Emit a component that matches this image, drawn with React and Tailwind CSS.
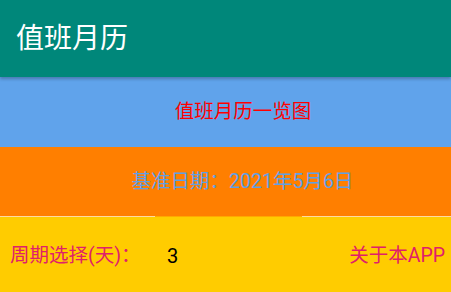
export default function App() {
  return (
    <div
      className="w-[451px] h-[292px] overflow-hidden flex flex-col bg-[#ffcc00]"
      style={{ fontFamily: '"Roboto", "Noto Sans CJK SC", sans-serif' }}
    >
      {/* toolbar */}
      <div className="h-[77px] shrink-0 bg-[#00877a] flex items-center pl-[16px] shadow-[0_2px_3px_rgba(0,0,0,0.25)] relative z-10">
        <span className="text-white text-[28px] leading-none">值班月历</span>
      </div>

      <div className="h-[70px] shrink-0 bg-[#60a3eb] flex items-center justify-center pl-[35px]">
        <span className="text-[#ff0000] text-[19.5px] leading-none">值班月历一览图</span>
      </div>

      <div className="h-[69px] shrink-0 bg-[#ff7f00] flex items-center justify-center pl-[34px]">
        <span className="text-[#5fa0e6] text-[19.5px] leading-none">基准日期：2021年5月6日</span>
      </div>

      <div className="h-px shrink-0 flex">
        <div className="w-[155px] bg-[#ffd9a0]" />
        <div className="w-[147px] bg-[#ffa800]" />
        <div className="flex-1 bg-[#ffd9a0]" />
      </div>

      <div className="flex-1 flex items-center justify-between pl-[10px] pr-[6px] pt-[3px]">
        <div className="flex items-center">
          <span className="text-[#e0206a] text-[19.5px] leading-none w-[157px]">周期选择(天)：</span>
          <span className="text-black text-[20px] leading-none">3</span>
        </div>
        <span className="text-[#e0206a] text-[19.5px] leading-none">关于本APP</span>
      </div>
    </div>
  );
}
